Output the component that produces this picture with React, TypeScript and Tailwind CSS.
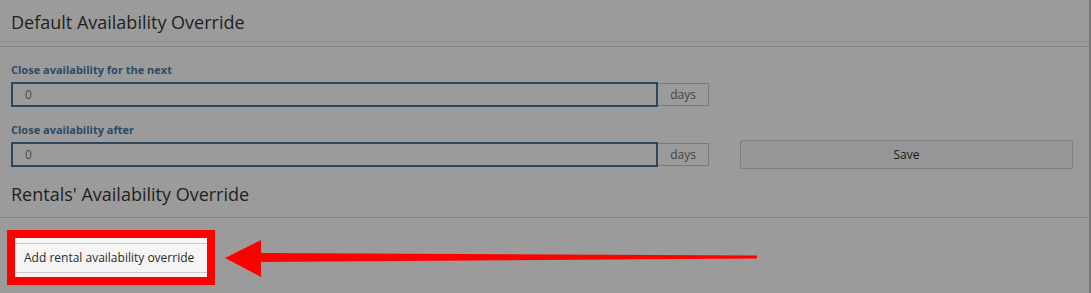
import React from "react";

export default function App() {
  return (
    <div
      className="relative w-[1091px] h-[293px] overflow-hidden bg-[#9b9b9b] border-r-2 border-[#7a7a7a]"
      style={{ fontFamily: '"Open Sans", "Liberation Sans", sans-serif' }}
    >
      {/* Header 1 */}
      <div className="h-[42px] flex items-center px-[11px] border-b border-[#929292]">
        <h3 className="text-[18px] leading-none text-[#1f1f1f] pt-[2px]">Default Availability Override</h3>
      </div>
      <div className="h-[5px] border-b border-[#848484]" />

      {/* Form */}
      <div className="px-[11px] pt-[16px]">
        <label className="block text-[11px] font-bold leading-[14px] text-[#2c4966]">
          Close availability for the next
        </label>
        <div className="mt-[5px] flex w-[698px] h-[25px]">
          <div className="flex-1 border-2 border-[#2d465e] flex items-center pl-[12px] text-[12px] text-[#4a4a4a]">
            0
          </div>
          <div className="w-[51px] my-[1px] border border-l-0 border-[#7a7a7a] flex items-center justify-center text-[12px] text-[#444]">
            days
          </div>
        </div>

        <label className="block mt-[16px] text-[11px] font-bold leading-[14px] text-[#2c4966]">
          Close availability after
        </label>
        <div className="mt-[5px] flex items-start">
          <div className="flex w-[698px] h-[25px]">
            <div className="flex-1 border-2 border-[#2d465e] flex items-center pl-[12px] text-[12px] text-[#4a4a4a]">
              0
            </div>
            <div className="w-[51px] my-[1px] border border-l-0 border-[#7a7a7a] flex items-center justify-center text-[12px] text-[#444]">
              days
            </div>
          </div>
          <div className="ml-[31px] -mt-[2px] w-[333px] h-[29px] bg-[#969696] border border-[#7f7f7f] rounded-[2px] flex items-center justify-center text-[12px] text-[#1c1c1c]">
            Save
          </div>
        </div>
      </div>

      {/* Header 2 */}
      <div className="h-[49px] flex items-center px-[11px] border-b border-[#858585]">
        <h3 className="text-[18px] leading-none text-[#1f1f1f] pt-[2px]">Rentals' Availability Override</h3>
      </div>

      {/* Highlighted button */}
      <div className="pl-[7px] pt-[12px]">
        <div className="inline-block border-[8px] border-[#ff0000] bg-[#f5f5f5]">
          <div className="w-[192px] h-[39px] flex items-center">
            <div className="w-full h-[30px] border-y border-[#c8c8c8] flex items-center pl-[9px] text-[12px] text-[#2a2a2a]">
              Add rental availability override
            </div>
          </div>
        </div>
      </div>

      {/* Annotation arrow */}
      <svg
        className="absolute left-0 top-0 pointer-events-none"
        width="1091"
        height="293"
        viewBox="0 0 1091 293"
      >
        <polygon points="225,258 261,240 261,277" fill="#ff0000" />
        <polygon points="258,253 757,255.5 757,258.5 258,262" fill="#ff0000" />
      </svg>
    </div>
  );
}
